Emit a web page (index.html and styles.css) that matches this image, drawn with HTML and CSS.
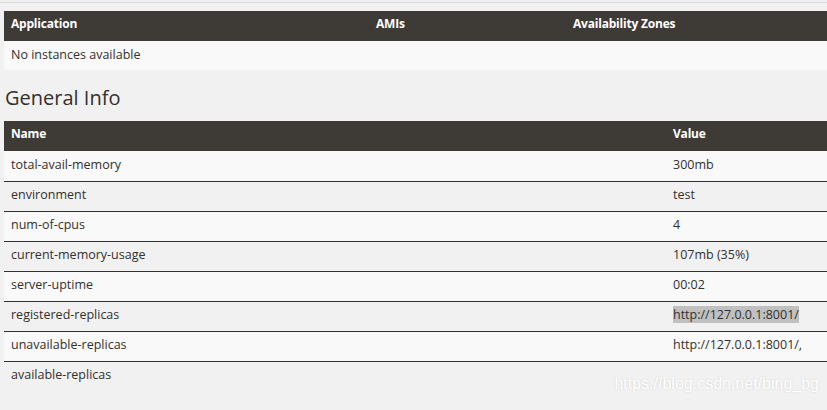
FILE: index.html
```html
<!DOCTYPE html>
<html>
<head>
<meta charset="utf-8">
<link rel="stylesheet" href="styles.css">
</head>
<body>
<div class="page">
  <table class="tbl instances">
    <thead>
      <tr><th class="c-app">Application</th><th class="c-ami">AMIs</th><th>Availability Zones</th></tr>
    </thead>
    <tbody>
      <tr><td colspan="3">No instances available</td></tr>
    </tbody>
  </table>
  <h1 class="title">General Info</h1>
  <table class="tbl info">
    <thead>
      <tr><th class="c-name">Name</th><th>Value</th></tr>
    </thead>
    <tbody>
      <tr><td>total-avail-memory</td><td>300mb</td></tr>
      <tr><td>environment</td><td>test</td></tr>
      <tr><td>num-of-cpus</td><td>4</td></tr>
      <tr><td>current-memory-usage</td><td>107mb (35%)</td></tr>
      <tr><td>server-uptime</td><td>00:02</td></tr>
      <tr><td>registered-replicas</td><td><span class="sel">http://127.0.0.1:8001/</span></td></tr>
      <tr><td>unavailable-replicas</td><td>http://127.0.0.1:8001/,</td></tr>
      <tr><td>available-replicas</td><td></td></tr>
    </tbody>
  </table>
  <div class="watermark">https://blog.csdn.net/bing_bg</div>
</div>
</body>
</html>
```
FILE: styles.css
```css
html, body {
  margin: 0;
  padding: 0;
  background: #f1f1f1;
}
body {
  font-family: "Open Sans", "DejaVu Sans", sans-serif;
  color: #34302d;
  font-size: 12.5px;
}
.page {
  position: relative;
  border-top: 1px solid #dcdcdc;
  margin-top: 2px;
  padding: 8px 0 0 4px;
  height: 397px;
  overflow: hidden;
}
.tbl {
  width: 823px;
  border-collapse: collapse;
  table-layout: fixed;
}
.tbl th {
  background: #3e3a35;
  color: #ffffff;
  font-weight: 700;
  text-align: left;
  height: 30px;
  padding: 0 7px 5px;
  box-sizing: border-box;
  font-size: 12px;
  letter-spacing: -0.2px;
}
.tbl td {
  height: 30px;
  padding: 0 7px 3px;
  box-sizing: border-box;
  font-size: 12.5px;
}
.instances td {
  background: #f9f9f9;
  height: 29px;
}
.c-app { width: 365px; }
.c-ami { width: 197px; }
.c-name { width: 662px; }
.info tbody tr:nth-child(odd) td { background: #f9f9f9; }
.info tbody tr:nth-child(even) td { background: #f1f1f1; }
.info tbody tr + tr td { border-top: 1px solid #34302d; }
.title {
  font-size: 20px;
  font-weight: 400;
  margin: 16px 0 11px 1px;
  line-height: 24px;
}
.sel {
  background: #c0c0c0;
}
.watermark {
  position: absolute;
  right: 8px;
  top: 372px;
  color: #ffffff;
  font-family: "Liberation Sans", Arial, sans-serif;
  font-size: 16px;
  text-shadow: 0 0 2px rgba(0,0,0,0.15);
}
```
